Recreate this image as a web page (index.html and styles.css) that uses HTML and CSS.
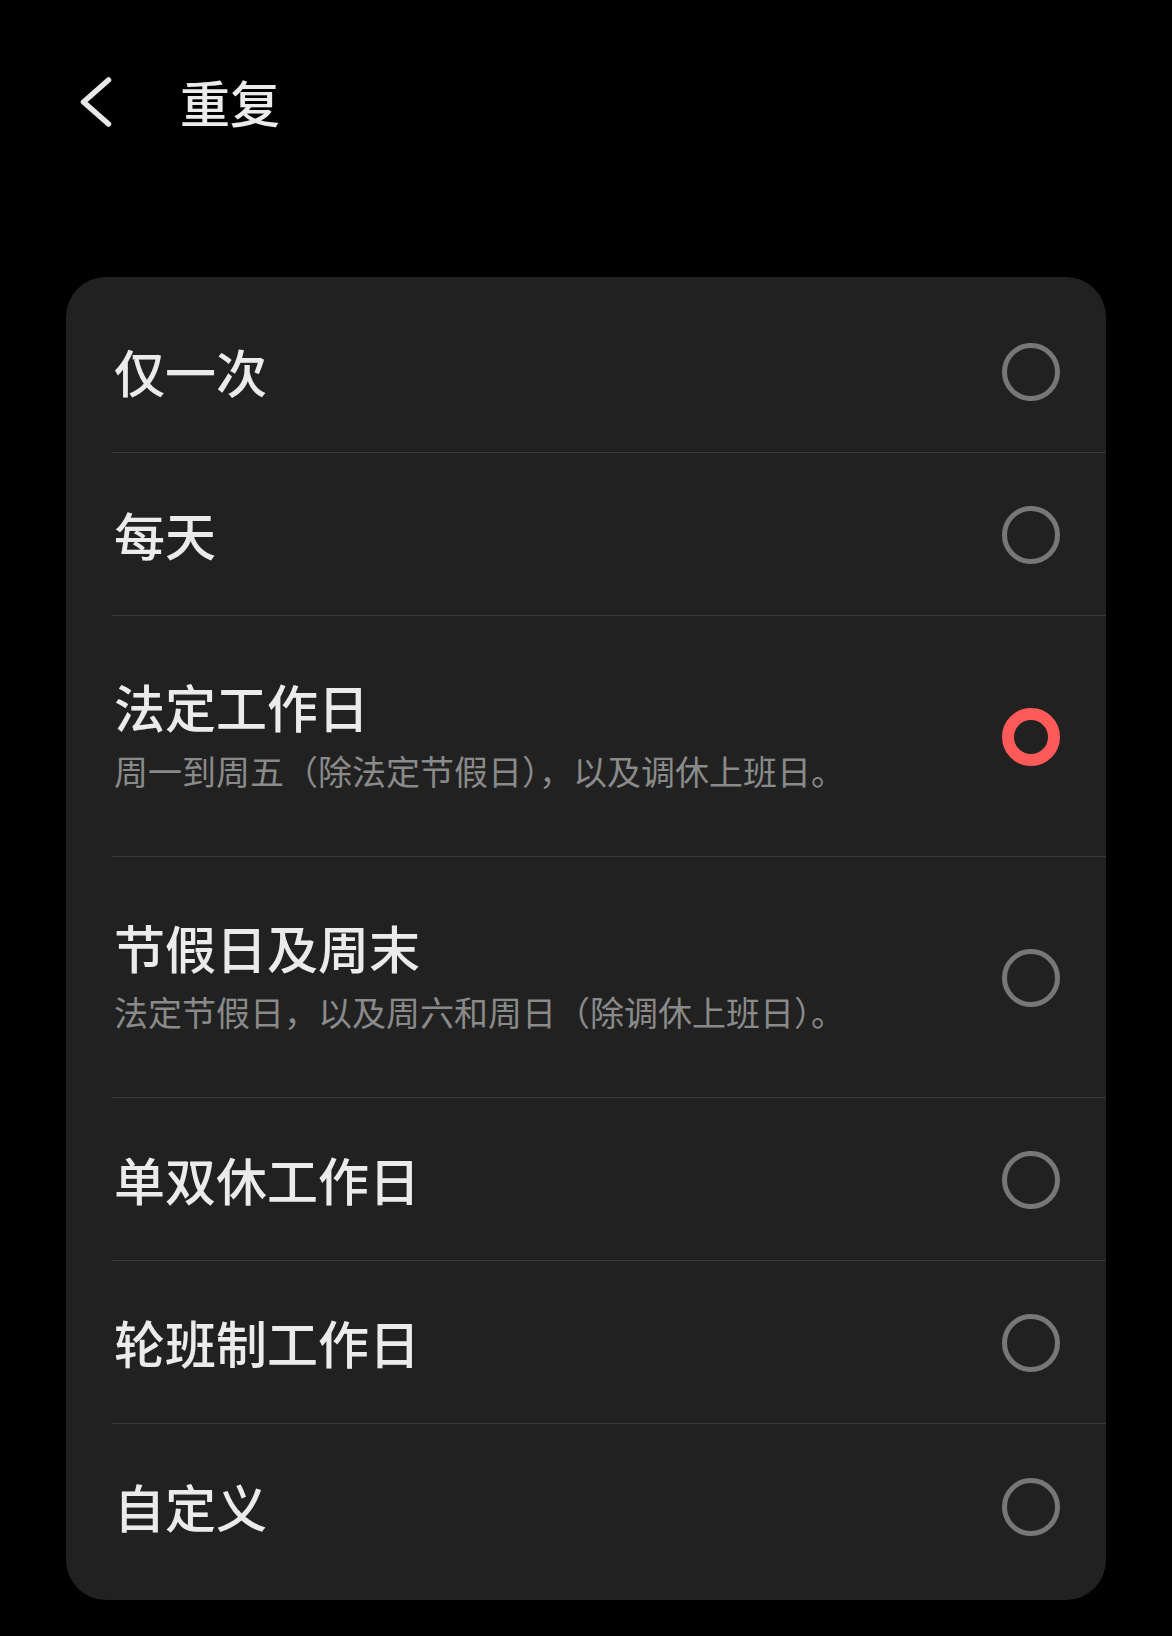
FILE: index.html
```html
<!DOCTYPE html>
<html lang="zh-CN">
<head>
<meta charset="utf-8">
<title>重复</title>
<link rel="stylesheet" href="styles.css">
</head>
<body>
<header class="topbar">
  <svg class="back" width="36" height="56" viewBox="0 0 36 56" aria-hidden="true">
    <polyline points="30.5,7 5.5,29 30.5,51" fill="none" stroke="#e8e8e8" stroke-width="5.5" stroke-linecap="round" stroke-linejoin="round"/>
  </svg>
  <h1 class="title">重复</h1>
</header>

<ul class="card">
  <li class="row"><div class="text"><div class="label">仅一次</div></div><span class="radio"></span></li>
  <li class="row"><div class="text"><div class="label">每天</div></div><span class="radio"></span></li>
  <li class="row tall"><div class="text"><div class="label">法定工作日</div><div class="desc">周一到周五（除法定节假日），以及调休上班日。</div></div><span class="radio on"></span></li>
  <li class="row tall"><div class="text"><div class="label">节假日及周末</div><div class="desc">法定节假日，以及周六和周日（除调休上班日）。</div></div><span class="radio"></span></li>
  <li class="row"><div class="text"><div class="label">单双休工作日</div></div><span class="radio"></span></li>
  <li class="row"><div class="text"><div class="label">轮班制工作日</div></div><span class="radio"></span></li>
  <li class="row last"><div class="text"><div class="label">自定义</div></div><span class="radio"></span></li>
</ul>
</body>
</html>
```

FILE: styles.css
```css
* { box-sizing: border-box; }

html, body {
  margin: 0;
  padding: 0;
  background: #000;
}

body {
  font-family: "Noto Sans CJK SC", "Noto Sans", sans-serif;
  color: #ebebeb;
  min-height: 1636px;
}

.topbar {
  display: flex;
  align-items: center;
  height: 98px;
  margin-top: 52px;
  padding-left: 78px;
}

.back {
  display: block;
  flex: none;
}

.title {
  margin: 0 0 0 66px;
  font-size: 50px;
  font-weight: 500;
  line-height: 1;
  color: #ebebeb;
}

.card {
  list-style: none;
  margin: 127px 0 0 66px;
  padding: 13px 0 13px 0;
  width: 1040px;
  background: #212121;
  border-radius: 40px;
}

.row {
  display: flex;
  align-items: center;
  justify-content: space-between;
  height: 163px;
  margin-left: 46px;
  padding: 0 46px 0 2px;
  border-bottom: 1px solid #3a3a3a;
}

.row.tall {
  height: 241px;
}

.row.last {
  border-bottom: none;
  height: 163px;
}

.text {
  display: flex;
  flex-direction: column;
}

.label {
  font-size: 51px;
  font-weight: 500;
  line-height: 70px;
  color: #ebebeb;
}

.desc {
  font-size: 34px;
  font-weight: 400;
  line-height: 60px;
  color: #8a8a8a;
}

.radio {
  flex: none;
  width: 58px;
  height: 58px;
  border-radius: 50%;
  border: 5.5px solid #777777;
  margin-top: 2px;
}

.radio.on {
  border: 12.5px solid #ff5a5a;
}
```
